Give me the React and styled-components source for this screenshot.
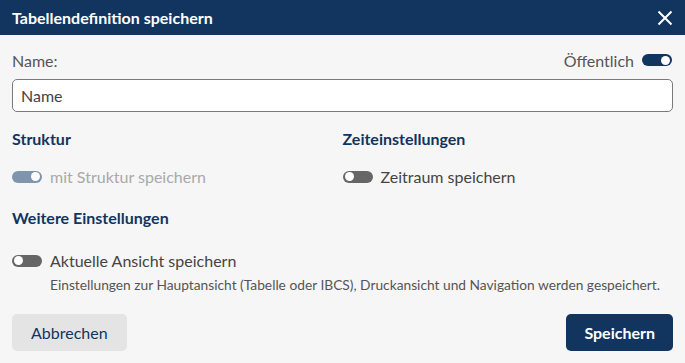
import React from "react";
import styled, { createGlobalStyle } from "styled-components";

const NAVY = "#11355f";

const Global = createGlobalStyle`
  html, body { margin: 0; padding: 0; background: #f6f6f6; }
  body { font-family: Lato, "Open Sans", sans-serif; }
  * { box-sizing: border-box; }
`;

const Dialog = styled.div`
  width: 685px;
  height: 363px;
  background: #f6f6f6;
  display: flex;
  flex-direction: column;
`;

const Header = styled.div`
  height: 35px;
  background: ${NAVY};
  display: flex;
  align-items: center;
  justify-content: space-between;
  padding: 0 12px 0 12px;
`;

const Title = styled.div`
  color: #fff;
  font-weight: 700;
  font-size: 16px;
`;

const CloseBtn = styled.button`
  background: none;
  border: 0;
  padding: 0;
  width: 16px;
  height: 16px;
  display: flex;
  cursor: pointer;
`;

const Body = styled.div`
  padding: 0 12px;
  display: flex;
  flex-direction: column;
`;

const LabelRow = styled.div`
  display: flex;
  justify-content: space-between;
  align-items: center;
  margin-top: 16px;
  height: 18px;
`;

const Label = styled.span`
  font-size: 16px;
  color: #555;
`;

const Public = styled.label`
  display: flex;
  align-items: center;
  gap: 8px;
  font-size: 16px;
  color: #555;
  margin-right: 1px;
`;

const Input = styled.input`
  margin-top: 10px;
  height: 33px;
  width: 100%;
  border: 1px solid #7a7a7a;
  border-radius: 5px;
  background: #fff;
  padding: 0 8px;
  font-family: Lato, sans-serif;
  font-size: 16px;
  color: #444;
  outline: none;
  &::placeholder { color: #444; }
`;

const Grid = styled.div`
  display: grid;
  grid-template-columns: 1fr 1fr;
  margin-top: 17px;
`;

const Section = styled.div`
  display: flex;
  flex-direction: column;
`;

const Heading = styled.div`
  font-size: 16px;
  font-weight: 700;
  color: ${NAVY};
  height: 19px;
  line-height: 19px;
  margin-top: ${(p) => p.$mt || 0}px;
`;

const ToggleRow = styled.label`
  display: flex;
  align-items: center;
  gap: 8px;
  margin-top: ${(p) => p.$mt || 0}px;
  font-size: 16px;
  height: 19px;
  color: ${(p) => (p.$disabled ? "#a9a9a9" : "#444")};
`;

const Track = styled.span`
  width: 30px;
  height: 12px;
  border-radius: 6px;
  flex: none;
  display: flex;
  align-items: center;
  justify-content: ${(p) => (p.$on ? "flex-end" : "flex-start")};
  padding: 0 2px;
  background: ${(p) => (p.$disabled ? "#7f95ae" : p.$on ? NAVY : "#666")};
`;

const Knob = styled.span`
  width: 9px;
  height: 9px;
  border-radius: 50%;
  background: #fff;
`;

const Description = styled.div`
  margin-top: 6px;
  margin-left: 38px;
  font-size: 13.75px;
  color: #555;
`;

const Footer = styled.div`
  display: flex;
  justify-content: space-between;
  margin-top: 21px;
`;

const Button = styled.button`
  height: 37px;
  border: 0;
  border-radius: 5px;
  font-family: Lato, sans-serif;
  font-size: 16px;
  padding: 0 ${(p) => (p.$primary ? 18 : 19)}px;
  background: ${(p) => (p.$primary ? NAVY : "#e4e4e4")};
  color: ${(p) => (p.$primary ? "#fff" : NAVY)};
  font-weight: ${(p) => (p.$primary ? 700 : 400)};
  cursor: pointer;
`;

function Toggle({ on, disabled }) {
  return (
    <Track $on={on} $disabled={disabled}>
      <Knob />
    </Track>
  );
}

export default function App() {
  return (
    <>
      <Global />
      <Dialog>
        <Header>
          <Title>Tabellendefinition speichern</Title>
          <CloseBtn aria-label="Schließen">
            <svg width="16" height="16" viewBox="0 0 16 16">
              <path d="M1.5 1.5 L14.5 14.5 M14.5 1.5 L1.5 14.5" stroke="#fff" strokeWidth="2" />
            </svg>
          </CloseBtn>
        </Header>
        <Body>
          <LabelRow>
            <Label>Name:</Label>
            <Public>
              Öffentlich
              <Toggle on />
            </Public>
          </LabelRow>
          <Input placeholder="Name" />
          <Grid>
            <Section>
              <Heading>Struktur</Heading>
              <ToggleRow $mt={19} $disabled>
                <Toggle on disabled />
                mit Struktur speichern
              </ToggleRow>
            </Section>
            <Section>
              <Heading>Zeiteinstellungen</Heading>
              <ToggleRow $mt={19}>
                <Toggle />
                Zeitraum speichern
              </ToggleRow>
            </Section>
          </Grid>
          <Heading $mt={22}>Weitere Einstellungen</Heading>
          <ToggleRow $mt={24}>
            <Toggle />
            Aktuelle Ansicht speichern
          </ToggleRow>
          <Description>
            Einstellungen zur Hauptansicht (Tabelle oder IBCS), Druckansicht und Navigation werden gespeichert.
          </Description>
          <Footer>
            <Button>Abbrechen</Button>
            <Button $primary>Speichern</Button>
          </Footer>
        </Body>
      </Dialog>
    </>
  );
}
